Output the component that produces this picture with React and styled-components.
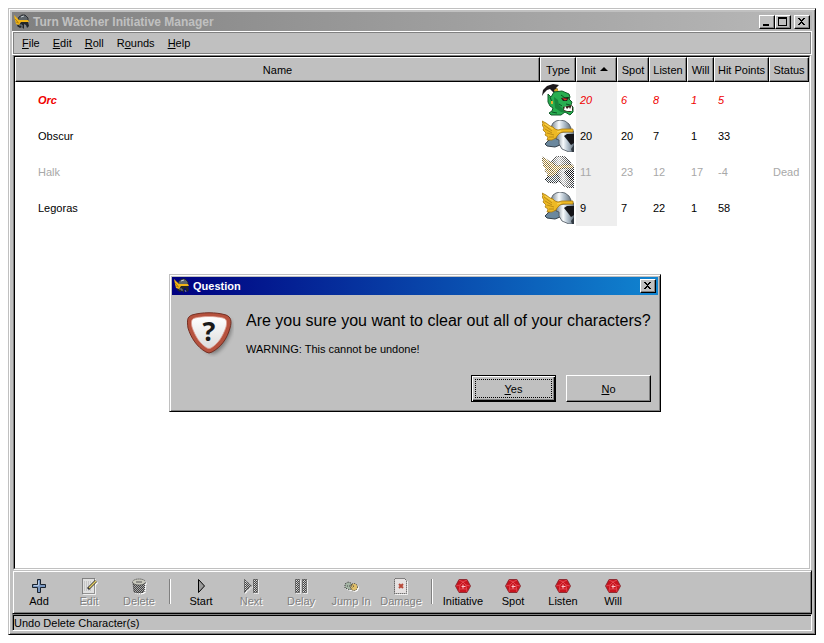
import React from "react";
import styled, { createGlobalStyle, css } from "styled-components";

const face = "#c0c0c0";
const shade = "#808080";

const GlobalStyle = createGlobalStyle`
  * { box-sizing: border-box; }
  body {
    margin: 0;
    background: #fff;
    color: #000;
    font: 11px/14px "Liberation Sans", Arial, sans-serif;
  }
  button { font: inherit; color: inherit; padding: 0; margin: 0; border: 0; background: ${face}; }
`;

const raised = css`
  border: 1px solid;
  border-color: #fff #000 #000 #fff;
  box-shadow: inset -1px -1px ${shade};
`;

const Desktop = styled.div`
  min-height: 100vh;
  padding: 8px;
  display: flex;
`;

const frame = css`
  background: ${face};
  border: 1px solid;
  border-color: ${face} #000 #000 ${face};
  box-shadow: inset 1px 1px #fff, inset -1px -1px ${shade};
`;

const MainWindow = styled.main`
  ${frame}
  flex: 1;
  min-width: 0;
  padding: 3px;
  display: flex;
  flex-direction: column;
`;

const TitleBar = styled.header`
  display: flex;
  align-items: center;
  height: ${(p) => (p.$active ? 18 : 19)}px;
  padding: 0 2px;
  gap: 3px;
  color: ${(p) => (p.$active ? "#fff" : face)};
  background: ${(p) =>
    p.$active
      ? "linear-gradient(90deg, #000080, #1084d0)"
      : "linear-gradient(90deg, #808080, #b8b8b8)"};
`;

const Title = styled.h1`
  flex: 1;
  margin: 0;
  font-size: ${(p) => p.$size}px;
  line-height: 16px;
  font-weight: bold;
  white-space: nowrap;
`;

const CaptionGroup = styled.div`
  display: flex;
`;

const CaptionButton = styled.button`
  ${raised}
  width: 16px;
  height: 14px;
  color: #000;
  svg { display: block; margin: 0 auto; }
`;

const MenuBar = styled.nav`
  display: flex;
  align-items: center;
  height: 24px;
  padding: 0 3px;
  gap: 1px;
  border: 1px solid #fff;
  box-shadow: inset 0 0 0 1px ${shade};
`;

const MenuButton = styled.button`
  padding: 0 6px;
  line-height: 18px;
`;

const ListBox = styled.section`
  flex: 1;
  margin: 0 1px;
  background: #fff;
  border: 1px solid;
  border-color: ${shade} #fff #fff ${shade};
`;

const ListInner = styled.div`
  height: 100%;
  border: 1px solid;
  border-color: #000 ${face} ${face} #000;
`;

const Table = styled.table`
  width: 100%;
  table-layout: fixed;
  border-collapse: separate;
  border-spacing: 0;
`;

const Col = styled.col`
  width: ${(p) => (p.$w ? `${p.$w}px` : "auto")};
`;

const HeadCell = styled.th`
  ${raised}
  height: 25px;
  padding: 0;
  background: ${face};
  font-weight: normal;
  white-space: nowrap;
  text-align: center;
  svg { margin: 0 4px; vertical-align: 3px; }
`;

const tones = {
  active: css`color: #f00000; font-style: italic;`,
  dead: css`color: #a8a8a8;`,
  normal: css`color: #000;`,
};

const Row = styled.tr`
  ${(p) => tones[p.$tone]}
`;

const Cell = styled.td`
  height: 36px;
  padding: 0 0 0 4px;
  white-space: nowrap;
  background: ${(p) => (p.$sorted ? "#eee" : "transparent")};
`;

const NameCell = styled(Cell)`
  padding-left: 23px;
  font-weight: ${(p) => (p.$bold ? "bold" : "normal")};
`;

const IconCell = styled(Cell)`
  padding: 0 2px;
  svg { display: block; }
`;

const ToolBar = styled.div`
  display: flex;
  height: 44px;
  padding: 0 1px;
  border: 1px solid;
  border-color: ${face} #000 #000 ${face};
  box-shadow: inset 1px 1px #fff, inset -1px -1px ${shade};
`;

const Tool = styled.button`
  width: 50px;
  margin: 2px 0;
  background: transparent;
  display: flex;
  flex-direction: column;
  align-items: center;
  white-space: nowrap;
  padding-top: 5px;
  svg { display: block; flex: none; }
  &:disabled { color: ${shade}; text-shadow: 1px 1px #fff; }
  &:disabled svg { filter: drop-shadow(1px 1px 0 #fff); }
`;

const Separator = styled.div`
  width: 2px;
  height: 25px;
  margin: 8px 5px;
  border-left: 1px solid ${shade};
  border-right: 1px solid #fff;
`;

const StatusBar = styled.footer`
  height: 17px;
  padding: 1px 0 0 1px;
  line-height: 15px;
  border: 1px solid;
  border-color: ${shade} #fff #fff ${shade};
  box-shadow: inset 1px 1px #000;
`;

const Dialog = styled.section`
  ${frame}
  position: absolute;
  left: 169px;
  top: 274px;
  width: 492px;
  padding: 2px;
`;

const DialogBody = styled.div`
  display: flex;
  gap: 12px;
  padding: 16px 8px 0 14px;
  svg { flex: none; }
`;

const Heading = styled.p`
  margin: 0 0 11px;
  font-size: 16px;
  line-height: 20px;
  white-space: nowrap;
`;

const Note = styled.p`
  margin: 0;
`;

const Actions = styled.div`
  display: flex;
  justify-content: flex-end;
  gap: 10px;
  padding: 18px 7px 7px;
`;

const PushButton = styled.button`
  width: 85px;
  height: 27px;
  ${raised}
  ${(p) =>
    p.$primary &&
    css`
      border-color: #000;
      box-shadow: inset 1px 1px #fff, inset -1px -1px #000, inset -2px -2px ${shade};
      outline: 1px dotted #000;
      outline-offset: -5px;
    `}
`;

const Key = ({ text, at = 0 }) => (
  <>
    {text.slice(0, at)}
    <u>{text[at]}</u>
    {text.slice(at + 1)}
  </>
);

const SmallHelmet = () => (
  <svg width="16" height="16" viewBox="0 0 16 16" aria-hidden="true">
    <path d="M4 5 5 3 8 1 11 1 14 4 14 7 6 7Z" fill="#5c646a" stroke="#1c2024" strokeWidth=".8" />
    <path d="M7 3 10 2" stroke="#c5ccd0" />
    <path d="M5 8 14 8 15 12 13 14 12 11 10 10 10 15 8 13 6 14 3 12Z" fill="#22262a" />
    <path d="M5 11H8V13M11 12 12 14" stroke="#7d858b" fill="none" />
    <path d="M0 1 3 4 5 6 14 6 15 8 7 8 5 11 2 10 1 6Z" fill="#f0b416" />
    <path d="M1 5 4 8M2 8 5 9" stroke="#a97808" strokeWidth=".8" />
  </svg>
);

function Helmet({ dead = false }) {
  const id = dead ? "dead" : "live";
  const gold = dead ? "#b08c3c" : "#edb924";
  const goldEdge = dead ? "#5c4c24" : "#a87a10";
  const edge = dead ? "#181818" : "#47505a";
  const steel = dead
    ? ["#444", "#c8c8c8", "#777", "#333"]
    : ["#76838e", "#f8fbfd", "#b4c2ce", "#66737e"];
  return (
    <svg width="32" height="32" viewBox="0 0 32 32" aria-hidden="true">
      <defs>
        <linearGradient id={`steel-${id}`} x1="0" x2="1">
          <stop offset="0" stopColor={steel[0]} />
          <stop offset=".4" stopColor={steel[1]} />
          <stop offset=".65" stopColor={steel[2]} />
          <stop offset="1" stopColor={steel[3]} />
        </linearGradient>
        <pattern id="dither" width="2" height="2" patternUnits="userSpaceOnUse">
          <path d="M0 0h1v1H0zM1 1h1v1H1z" fill="#fff" shapeRendering="crispEdges" />
        </pattern>
        <mask id="holes" maskUnits="userSpaceOnUse" x="0" y="0" width="32" height="32">
          <rect width="32" height="32" fill="url(#dither)" />
        </mask>
      </defs>
      <g mask={dead ? "url(#holes)" : undefined}>
        <path d="M9 7 11 3 14 1 18 0 23 1 27 4 29 8V11L14 12Z" fill={`url(#steel-${id})`} stroke={edge} strokeWidth=".8" />
        <path d="M3 24 7 20 12 18 18 19 18 25 13 27 5 26Z" fill={dead ? "#4c5860" : "#6b889e"} stroke={dead ? "#111" : "#33404b"} />
        <path d="M15 13 32 11V32H27L20 29 17 24 17 20 14 19Z" fill={`url(#steel-${id})`} stroke={edge} strokeWidth=".8" />
        <path d="M22 16 25 14 32 14V23L29 25 26 21Z" fill="#141418" />
        <path d="M29 29 32 25V32H30Z" fill="#333b44" />
        <path d="M0 1 4 3 8 6 11 7 13 9 16 10 20 9 31 9V12H21L18 13 15 16 14 18 10 20H5L6 17 3 15 4 13 1 10 2 8 0 5 1 4Z" fill={gold} stroke={goldEdge} strokeWidth=".8" />
        <path d="M2 5 10 11M3 9 10 13M5 13 12 15M7 17 12 17" stroke={goldEdge} strokeWidth=".7" fill="none" />
        <path d="M3 4 11 9M15 12 19 11" stroke={dead ? "#c6a75e" : "#ffdf68"} strokeWidth=".8" fill="none" />
      </g>
    </svg>
  );
}

function OrcHead() {
  return (
    <svg width="32" height="32" viewBox="0 0 32 32" aria-hidden="true">
      <path d="M0 12 1 6 5 2 11 0 17 1 14 4 16 5 15 9 11 8 8 5 5 6 2 9Z" fill="#1d191c" />
      <path d="M12 6 15 4 17 8 13 9Z" fill="#d9a52b" />
      <path d="M6 10 9 13 12 8 20 7 27 10 28 13 27 15 30 18 29 21 31 23 31 28 28 31 23 28 19 31H9L7 29 10 27 11 24 8 22 6 18Z" fill="#28ae50" stroke="#125b2a" />
      <path d="M12 13 16 16 17 21 22 26 26 29 19 28 13 24Z" fill="#18853b" />
      <path d="M8 13 10 18M19 11 23 14 28 14M17 20 20 22M24 20 28 21M10 28 15 29" stroke="#0b5426" fill="none" />
      <path d="M19 14 27 13 25 17 21 17Z" fill="#18251a" />
      <path d="M20 14 26 15 23 16.500Z" fill="#d8302c" />
      <path d="M21 23 30 21 31 26 28 28 22 27Z" fill="#382019" />
      <path d="M22 26 23 22 25 25 27 23 28 25 30 21 30 27 25 27Z" fill="#fff" />
      <path d="M10 17V20" stroke="#e1b030" strokeWidth="2" />
    </svg>
  );
}

function QuestionShield() {
  return (
    <svg width="48" height="46" viewBox="0 0 48 46" aria-hidden="true">
      <defs>
        <filter id="soft" x="-20%" y="-20%" width="150%" height="150%">
          <feGaussianBlur stdDeviation="2" />
        </filter>
        <linearGradient id="plate" x1="0" y1="0" x2="0" y2="1">
          <stop offset="0" stopColor="#fff" />
          <stop offset="1" stopColor="#dcdcdc" />
        </linearGradient>
      </defs>
      <path d="M10 8 40 7C46 9 47 14 44 24 40 33 34 41 27 43 18 41 9 31 10 8Z" fill="#000" opacity=".4" filter="url(#soft)" />
      <path d="M6 4C16 1 30 1 40 4 45 6 46 10 44 17 41 28 35 36 26 41Q23 43 20 41C11 36 5 27 2 17 1 9 1 6 6 4Z" fill="#b6523e" stroke="#742e22" />
      <path d="M9 7C17 5 29 5 37 7 41 8 41 11 40 16 37 25 32 33 25 37Q23 38 21 37C14 33 9 25 6 16 5 11 5 8 9 7Z" fill="url(#plate)" stroke="#dd9d90" strokeWidth=".8" />
      <text x="23" y="30" textAnchor="middle" fontFamily="Open Sans, sans-serif" fontWeight="bold" fontSize="27" fill="#1a1a1a">?</text>
    </svg>
  );
}

const Die = () => (
  <svg width="16" height="16" viewBox="0 0 16 16" aria-hidden="true">
    <path d="M4 1.500h8L15.500 8 12 14.500H4L.5 8Z" fill="#c8141e" stroke="#7d2027" strokeWidth=".8" />
    <path d="M4 2 8 4l4-2M1 8l4-1 3-3 3 3 4 1M5 7l-1 7M11 7l1 7M5 11h6" stroke="#e8505a" strokeWidth=".8" fill="none" />
    <path d="M8 6.500v4M6.500 8.500h4" stroke="#ffc4c8" />
  </svg>
);

const ditherDefs = (name) => (
  <defs>
    <pattern id={name} width="2" height="2" patternUnits="userSpaceOnUse">
      <path d="M0 0h1v1H0zM1 1h1v1H1z" fill="#444" />
    </pattern>
  </defs>
);

const glyphs = {
  add: (
    <>
      <path d="M6.500 1.500h3v5h5v3h-5v5h-3v-5h-5v-3h5z" fill="#7896c0" stroke="#18222f" strokeLinejoin="round" />
      <path d="M7.500 3v4.500H3" stroke="#b4c8e4" fill="none" />
    </>
  ),
  edit: (
    <>
      <path d="M1.500.5h12v15h-12z" fill="#e0e0e0" stroke="#333" strokeDasharray="1 1" />
      <path d="M3 4h8M3 6h6M3 8h5M3 10h4M3 12h8" stroke="#aaa" strokeDasharray="1 1" />
      <path d="m7 11 8-8" stroke="#333" strokeWidth="3" />
      <path d="m8 10 7-7" stroke="#e5ce63" strokeWidth="1.500" />
    </>
  ),
  remove: (
    <>
      {ditherDefs("bin")}
      <path d="M2 5h12l-1 9-3 1H6l-3-1Z" fill="#aaa" />
      <path d="M2 5h12l-1 9-3 1H6l-3-1Z" fill="url(#bin)" stroke="#333" strokeDasharray="1 1" />
      <ellipse cx="8" cy="4" rx="6.500" ry="3" fill="#c9c9bd" stroke="#333" strokeDasharray="1 1" />
      <path d="M5 4h6" stroke="#555" />
    </>
  ),
  start: <path d="M5.500 1.500v13l6-6.500z" fill="#9a9a9a" stroke="#000" />,
  next: (
    <>
      {ditherDefs("nx")}
      <path d="M1.500 1.500v13l7-6.500zM10.500 1.500h4v13h-4z" fill="url(#nx)" stroke="#333" strokeDasharray="1 1" />
    </>
  ),
  delay: (
    <>
      {ditherDefs("dl")}
      <path d="M2.500 1.500h4v13h-4zM9.500 1.500h4v13h-4z" fill="url(#dl)" stroke="#333" strokeDasharray="1 1" />
    </>
  ),
  jump: (
    <>
      <path d="M2 6 5 4l3 1 1 5-2 2-5-2Z" fill="#a5b5a5" stroke="#333" strokeDasharray="1 1" />
      <circle cx="11" cy="9" r="3.500" fill="#e2c06a" stroke="#333" strokeDasharray="1 1" />
      <path d="M4 8h6M8 6l3 2-3 3" stroke="#444" fill="none" strokeDasharray="1 1" />
    </>
  ),
  damage: (
    <>
      <path d="M2.500.5h9l2 2v13h-12v-14z" fill="#e6e2e2" stroke="#333" strokeDasharray="1 1" />
      <path d="m6 6 4 4M10 6l-4 4" stroke="#b84a3a" strokeWidth="2" />
    </>
  ),
};

const Glyph = ({ name }) =>
  name === "die" ? (
    <Die />
  ) : (
    <svg width="16" height="16" viewBox="0 0 16 16" aria-hidden="true">
      {glyphs[name]}
    </svg>
  );

const caption = {
  Minimize: <path d="M3 8h6v2H3z" />,
  Maximize: <path d="M2 1h9v9H2zM3 3v6h7V3z" fillRule="evenodd" />,
  Close: <path d="M3 2h2v1h1v1h1V3h1V2h2v1H9v1H8v1H7v1h1v1h1v1h1v1H8V8H7V7H6v1H5v1H3V8h1V7h1V6h1V5H5V4H4V3H3z" />,
};

const Caption = ({ name }) => (
  <CaptionButton type="button" aria-label={name}>
    <svg width="14" height="12" viewBox="0 0 14 12" shapeRendering="crispEdges" aria-hidden="true">
      {caption[name]}
    </svg>
  </CaptionButton>
);

const menus = [["File", 0], ["Edit", 0], ["Roll", 0], ["Rounds", 1], ["Help", 0]];

const columns = [
  ["Name", 0],
  ["Type", 36],
  ["Init", 41],
  ["Spot", 32],
  ["Listen", 38],
  ["Will", 27],
  ["Hit Points", 55],
  ["Status", 40],
];

const characters = [
  { name: "Orc", tone: "active", orc: true, stats: ["20", "6", "8", "1", "5", ""] },
  { name: "Obscur", tone: "normal", stats: ["20", "20", "7", "1", "33", ""] },
  { name: "Halk", tone: "dead", stats: ["11", "23", "12", "17", "-4", "Dead"] },
  { name: "Legoras", tone: "normal", stats: ["9", "7", "22", "1", "58", ""] },
];

const tools = [
  [["Add", "add"], ["Edit", "edit", true], ["Delete", "remove", true]],
  [["Start", "start"], ["Next", "next", true], ["Delay", "delay", true], ["Jump In", "jump", true], ["Damage", "damage", true]],
  [["Initiative", "die"], ["Spot", "die"], ["Listen", "die"], ["Will", "die"]],
];

export default function App() {
  return (
    <Desktop>
      <GlobalStyle />
      <MainWindow>
        <TitleBar>
          <SmallHelmet />
          <Title $size={12}>Turn Watcher Initiative Manager</Title>
          <CaptionGroup>
            <Caption name="Minimize" />
            <Caption name="Maximize" />
          </CaptionGroup>
          <Caption name="Close" />
        </TitleBar>

        <MenuBar>
          {menus.map(([text, at]) => (
            <MenuButton type="button" key={text}>
              <Key text={text} at={at} />
            </MenuButton>
          ))}
        </MenuBar>

        <ListBox>
          <ListInner>
            <Table>
              <colgroup>
                {columns.map(([label, w]) => <Col key={label} $w={w} />)}
              </colgroup>
              <thead>
                <tr>
                  {columns.map(([label]) => (
                    <HeadCell key={label} scope="col" aria-sort={label === "Init" ? "descending" : undefined}>
                      {label}
                      {label === "Init" && (
                        <svg width="8" height="4" viewBox="0 0 8 4" aria-hidden="true">
                          <path d="M4 0 8 4H0Z" />
                        </svg>
                      )}
                    </HeadCell>
                  ))}
                </tr>
              </thead>
              <tbody>
                {characters.map((c) => (
                  <Row key={c.name} $tone={c.tone}>
                    <NameCell $bold={c.orc}>{c.name}</NameCell>
                    <IconCell>{c.orc ? <OrcHead /> : <Helmet dead={c.tone === "dead"} />}</IconCell>
                    {c.stats.map((value, i) => (
                      <Cell key={columns[i + 2][0]} $sorted={i === 0}>{value}</Cell>
                    ))}
                  </Row>
                ))}
              </tbody>
            </Table>
          </ListInner>
        </ListBox>

        <ToolBar role="toolbar">
          {tools.map((group, g) => (
            <React.Fragment key={group[0][0]}>
              {g > 0 && <Separator />}
              {group.map(([label, icon, disabled]) => (
                <Tool type="button" key={label} disabled={disabled}>
                  <Glyph name={icon} />
                  {label}
                </Tool>
              ))}
            </React.Fragment>
          ))}
        </ToolBar>
        <StatusBar>Undo Delete Character(s)</StatusBar>
      </MainWindow>

      <Dialog role="dialog" aria-labelledby="dialog-title">
        <TitleBar $active>
          <SmallHelmet />
          <Title as="h2" id="dialog-title" $size={11}>Question</Title>
          <Caption name="Close" />
        </TitleBar>
        <DialogBody>
          <QuestionShield />
          <div>
            <Heading>Are you sure you want to clear out all of your characters?</Heading>
            <Note>WARNING: This cannot be undone!</Note>
          </div>
        </DialogBody>
        <Actions>
          <PushButton type="button" $primary><Key text="Yes" /></PushButton>
          <PushButton type="button"><Key text="No" /></PushButton>
        </Actions>
      </Dialog>
    </Desktop>
  );
}
